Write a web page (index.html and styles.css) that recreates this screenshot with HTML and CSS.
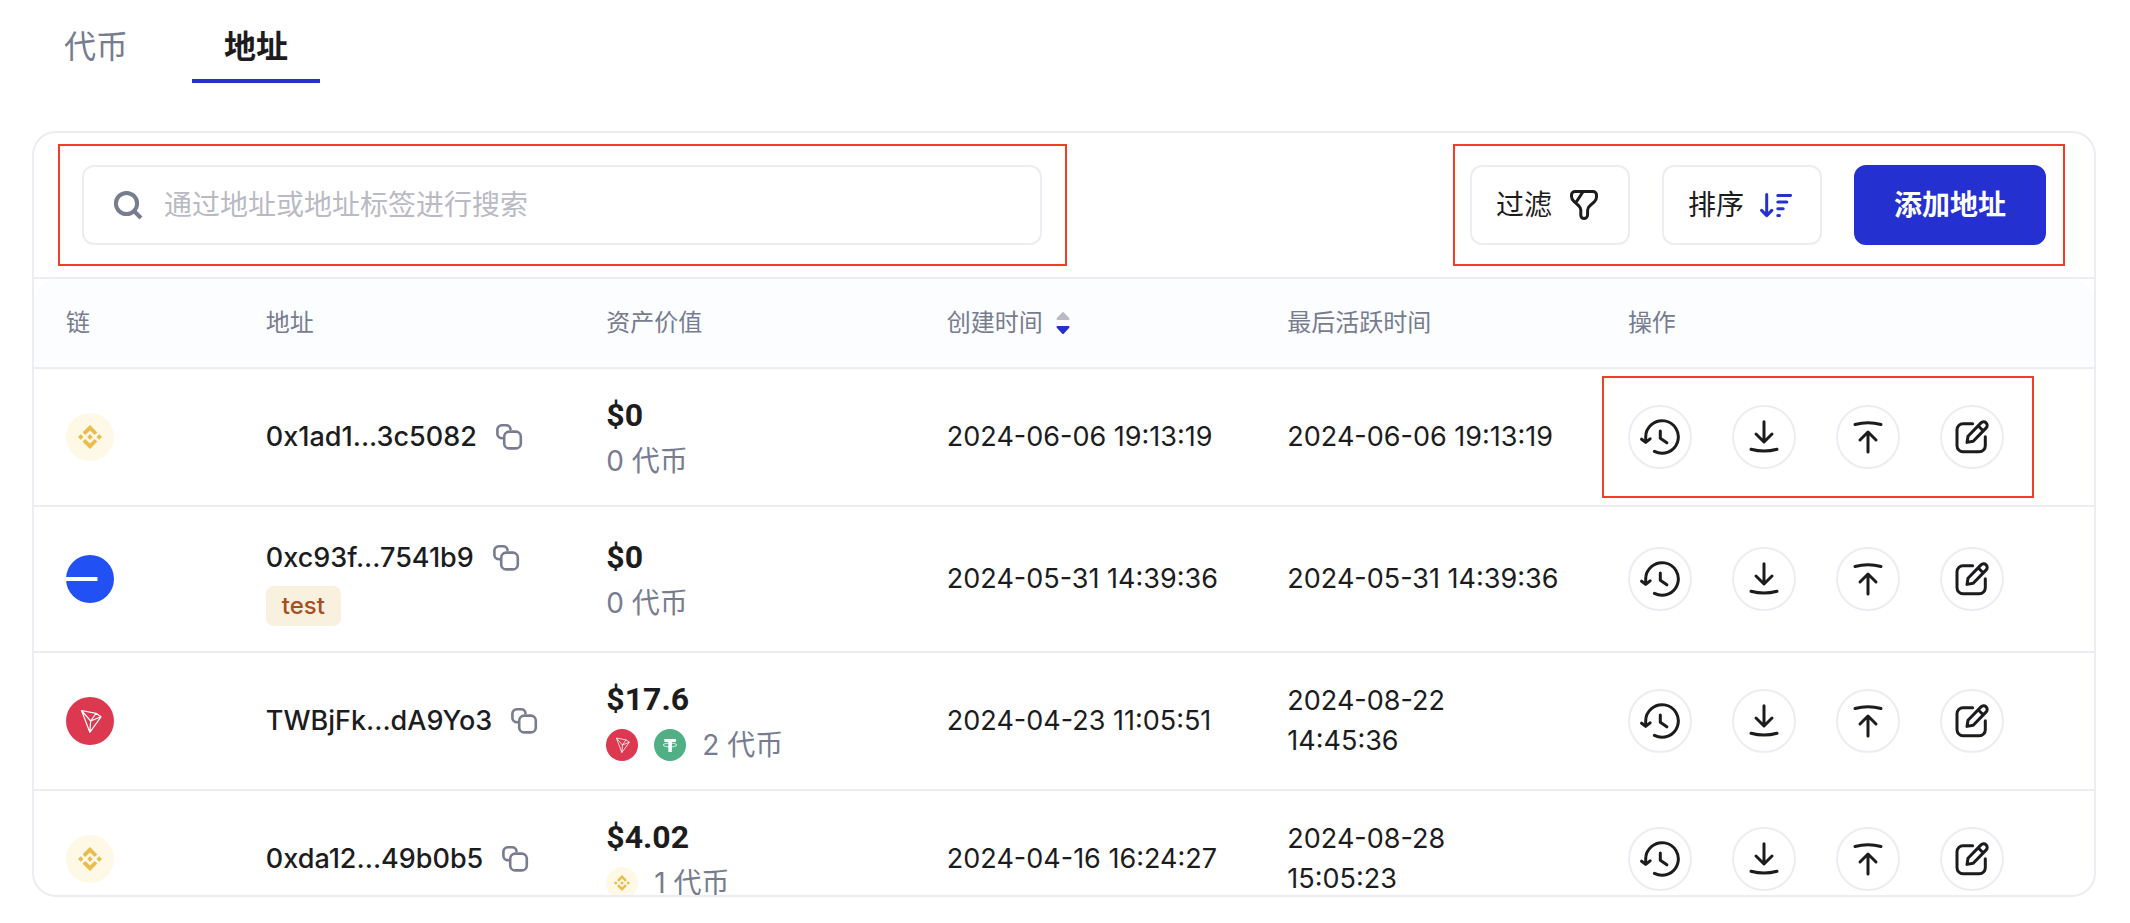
FILE: index.html
```
<!DOCTYPE html>
<html lang="zh-CN">
<head>
<meta charset="utf-8">
<meta name="viewport" content="width=device-width, initial-scale=1">
<title>地址</title>
<link rel="stylesheet" href="styles.css">
</head>
<body>
<svg class="sprite" aria-hidden="true">
  <symbol id="copy" viewBox="0 0 28 28"><g fill="none" stroke="currentColor" stroke-width="2.6" stroke-linecap="round"><rect x="9.2" y="8.6" width="16.6" height="16.8" rx="5"/><path d="M7.4 15.2C4.4 15.2 2.4 13.4 2.4 11V6.6a4.3 4.3 0 0 1 4.3-4.3h4.6a4.2 4.2 0 0 1 4.2 3.8"/></g></symbol>
  <symbol id="history" viewBox="0 0 40 40"><path d="M5.7 25v-5A16.3 16.3 0 1 1 14.4 34.4M1.6 22.2l4.1 3.2 4.4-3.6M20.3 14v7.3l6.5 4.5"/></symbol>
  <symbol id="download" viewBox="0 0 40 40"><path d="M20 4.7v19.8M12 17l8 8 8-8M7 32.3q13 3.6 26 0"/></symbol>
  <symbol id="upload" viewBox="0 0 40 40"><path d="M20 35V15.5M12 23l8-8 8 8M7 7.5q13-3.6 26 0"/></symbol>
  <symbol id="edit" viewBox="0 0 40 40"><path d="M20.6 6.7H11a6 6 0 0 0-6 6v16a6 6 0 0 0 6 6h16.3a6 6 0 0 0 6-6v-8.9M15 25.4l1-6.2L29 5.9a3.6 3.6 0 0 1 5.2 5L21.2 24.2zM26.4 9l5 5"/></symbol>
  <symbol id="bnb" viewBox="0 0 48 48"><circle cx="24" cy="24" r="24" fill="#fef8e7"/><path transform="translate(4.8 4.8) scale(1.2)" fill="#eabc4b" d="M12.116 14.404L16 10.52l3.886 3.886 2.26-2.26L16 6l-6.144 6.144 2.26 2.26zM6 16l2.26-2.26L10.52 16l-2.26 2.26L6 16zm6.116 1.596L16 21.48l3.886-3.886 2.26 2.259L16 26l-6.144-6.144-.003-.003 2.263-2.257zM21.48 16l2.26-2.26L26 16l-2.26 2.26L21.48 16zm-3.188-.002h.002V16L16 18.294l-2.291-2.29-.004-.004.6-.6L16 13.706l2.293 2.293z"/></symbol>
  <symbol id="base" viewBox="0 0 48 48"><circle cx="24" cy="24" r="24" fill="#2151f5"/><path d="M0 22h31.5v4H0z" fill="#fff"/></symbol>
  <symbol id="tron" viewBox="0 0 48 48"><circle cx="24" cy="24" r="24" fill="#dc384f"/><path d="M15.5 13.500L30 16.300l5 3.500-11.200 15.500zL24.700 24 35 19.800M24.700 24l-.9 11.300M24.700 24L30 16.300" fill="none" stroke="#fff" stroke-width="1.200" stroke-linejoin="round"/></symbol>
  <symbol id="usdt" viewBox="0 0 32 32"><circle cx="16" cy="16" r="16" fill="#50af84"/><path d="M10.300 9.900h11.600v3h-4v10.200h-3.600V12.900h-4z" fill="#fff"/><ellipse cx="16" cy="16" rx="6.800" ry="1.900" fill="none" stroke="#fff" stroke-width=".8"/></symbol>
</svg>

<nav class="tabs">
  <a class="tab" href="#tokens">代币</a>
  <a class="tab tab-active" href="#addresses" aria-current="page">地址</a>
</nav>

<main class="panel">
  <div class="toolbar">
    <label class="search callout callout-search">
      <svg class="search-icon" viewBox="0 0 32 32" aria-hidden="true"><circle cx="14.500" cy="14.500" r="10.600"/><path d="M22 22l7 7"/></svg>
      <input class="search-input" type="search" placeholder="通过地址或地址标签进行搜索" aria-label="搜索">
    </label>
    <div class="toolbar-actions callout callout-toolbar">
      <button class="btn" type="button">过滤
        <svg class="btn-icon" viewBox="0 0 32 32" aria-hidden="true"><path d="M7 2.500h18a3.500 3.500 0 0 1 3.500 3.500v2c0 2-1 3.600-2.300 4.900l-4.400 4c-1.400 1.300-2.200 2.600-2.200 4.400v4.500c0 2-1.800 3.700-3.600 3.700s-3.200-1.400-3.200-3.200v-5.200c0-1.700-.8-3-2-4.200L6 12.400C4.500 11 3.500 9.500 3.500 7.500V6A3.500 3.500 0 0 1 7 2.500zM15 2.800L7.800 13.800"/></svg>
      </button>
      <button class="btn" type="button">排序
        <svg class="btn-icon btn-icon-sort" viewBox="0 0 32 32" aria-hidden="true"><path d="M6.700 5.500v21M1.600 21.400l5.100 5.200 5.100-5.200M17.800 6.400h12.800M17.800 13h9M17.800 19.800h5.400M17.800 26.500h1.600"/></svg>
      </button>
      <button class="btn btn-primary" type="button">添加地址</button>
    </div>
  </div>

  <table class="grid">
    <colgroup><col class="col-chain"><col class="col-data"><col class="col-data"><col class="col-data"><col class="col-data"><col></colgroup>
    <thead>
      <tr>
        <th scope="col">链</th>
        <th scope="col">地址</th>
        <th scope="col">资产价值</th>
        <th scope="col" aria-sort="descending"><span class="sortable">创建时间
          <svg class="carets" viewBox="0 0 16 24" aria-hidden="true"><path d="M2.500 8L8 2l5.500 6z" fill="#b9bac4" stroke="#b9bac4"/><path d="M2.500 16L8 22l5.500-6z" fill="#2430d0" stroke="#2430d0"/></svg></span></th>
        <th scope="col">最后活跃时间</th>
        <th scope="col">操作</th>
      </tr>
    </thead>
    <tbody>
      <tr>
        <td><svg class="chain" role="img" aria-label="BNB"><use href="#bnb"/></svg></td>
        <td><div class="address">0x1ad1...3c5082<button class="copy" type="button" aria-label="复制"><svg><use href="#copy"/></svg></button></div></td>
        <td><div class="value">$0</div><div class="tokens">0 代币</div></td>
        <td>2024-06-06 19:13:19</td>
        <td>2024-06-06 19:13:19</td>
        <td><div class="actions callout callout-actions">
          <button class="action" type="button" aria-label="历史"><svg><use href="#history"/></svg></button>
          <button class="action" type="button" aria-label="接收"><svg><use href="#download"/></svg></button>
          <button class="action" type="button" aria-label="发送"><svg><use href="#upload"/></svg></button>
          <button class="action" type="button" aria-label="编辑"><svg><use href="#edit"/></svg></button>
        </div></td>
      </tr>
      <tr>
        <td><svg class="chain" role="img" aria-label="Base"><use href="#base"/></svg></td>
        <td class="tagged"><div class="address">0xc93f...7541b9<button class="copy" type="button" aria-label="复制"><svg><use href="#copy"/></svg></button></div><span class="tag">test</span></td>
        <td><div class="value">$0</div><div class="tokens">0 代币</div></td>
        <td>2024-05-31 14:39:36</td>
        <td>2024-05-31 14:39:36</td>
        <td><div class="actions">
          <button class="action" type="button" aria-label="历史"><svg><use href="#history"/></svg></button>
          <button class="action" type="button" aria-label="接收"><svg><use href="#download"/></svg></button>
          <button class="action" type="button" aria-label="发送"><svg><use href="#upload"/></svg></button>
          <button class="action" type="button" aria-label="编辑"><svg><use href="#edit"/></svg></button>
        </div></td>
      </tr>
      <tr>
        <td><svg class="chain" role="img" aria-label="Tron"><use href="#tron"/></svg></td>
        <td><div class="address">TWBjFk...dA9Yo3<button class="copy" type="button" aria-label="复制"><svg><use href="#copy"/></svg></button></div></td>
        <td><div class="value">$17.6</div><div class="tokens"><svg class="token"><use href="#tron"/></svg><svg class="token"><use href="#usdt"/></svg>2 代币</div></td>
        <td>2024-04-23 11:05:51</td>
        <td>2024-08-22<br>14:45:36</td>
        <td><div class="actions">
          <button class="action" type="button" aria-label="历史"><svg><use href="#history"/></svg></button>
          <button class="action" type="button" aria-label="接收"><svg><use href="#download"/></svg></button>
          <button class="action" type="button" aria-label="发送"><svg><use href="#upload"/></svg></button>
          <button class="action" type="button" aria-label="编辑"><svg><use href="#edit"/></svg></button>
        </div></td>
      </tr>
      <tr>
        <td><svg class="chain" role="img" aria-label="BNB"><use href="#bnb"/></svg></td>
        <td><div class="address">0xda12...49b0b5<button class="copy" type="button" aria-label="复制"><svg><use href="#copy"/></svg></button></div></td>
        <td><div class="value">$4.02</div><div class="tokens"><svg class="token"><use href="#bnb"/></svg>1 代币</div></td>
        <td>2024-04-16 16:24:27</td>
        <td>2024-08-28<br>15:05:23</td>
        <td><div class="actions">
          <button class="action" type="button" aria-label="历史"><svg><use href="#history"/></svg></button>
          <button class="action" type="button" aria-label="接收"><svg><use href="#download"/></svg></button>
          <button class="action" type="button" aria-label="发送"><svg><use href="#upload"/></svg></button>
          <button class="action" type="button" aria-label="编辑"><svg><use href="#edit"/></svg></button>
        </div></td>
      </tr>
    </tbody>
  </table>
</main>
</body>
</html>
```
FILE: styles.css
```
:root {
  --ink: #1c1c1e;
  --muted: #777c8f;
  --faint: #b9bac4;
  --line: #ececf3;
  --primary: #2430d0;
  --mark: #f03e27;
  --cjk: "Noto Sans CJK SC", sans-serif;
}

* { box-sizing: border-box; }

body {
  margin: 0;
  height: 100vh;
  padding: 23px 34px 26px 32px;
  display: flex;
  flex-direction: column;
  gap: 48px;
  background: #fff;
  color: var(--ink);
  font-family: Inter, var(--cjk);
  font-size: 27px;
  line-height: 40px;
}

button, input { font: inherit; color: inherit; }
svg { display: block; }
.sprite { position: absolute; width: 0; height: 0; }

.tabs { display: flex; flex: none; gap: 32px; }
.tab {
  padding: 0 32px 8px;
  border-bottom: 4px solid transparent;
  color: var(--muted);
  font-size: 32px;
  line-height: 48px;
  text-decoration: none;
}
.tab-active { border-color: var(--primary); color: var(--ink); font-weight: 700; }

.panel {
  flex: 1;
  min-height: 0;
  overflow: hidden;
  border: 2px solid var(--line);
  border-radius: 24px;
}

.toolbar {
  display: flex;
  justify-content: space-between;
  gap: 48px;
  padding: 32px 48px;
  border-bottom: 2px solid var(--line);
}

.search {
  flex: 0 1 960px;
  display: flex;
  align-items: center;
  gap: 20px;
  height: 80px;
  padding: 0 28px;
  border: 2px solid var(--line);
  border-radius: 12px;
}
.search-icon {
  flex: none;
  width: 32px;
  height: 32px;
  fill: none;
  stroke: var(--muted);
  stroke-width: 4;
}
.search-input {
  flex: 1;
  min-width: 0;
  padding: 0;
  border: 0;
  outline: 0;
  background: none;
  font-size: 28px;
}
.search-input::placeholder { color: var(--faint); opacity: 1; }

.toolbar-actions { display: flex; gap: 32px; }
.btn {
  display: flex;
  align-items: center;
  gap: 16px;
  height: 80px;
  padding: 0 28px 0 24px;
  border: 2px solid var(--line);
  border-radius: 12px;
  background: #fff;
  font-size: 28px;
  white-space: nowrap;
}
.btn-icon {
  width: 32px;
  height: 32px;
  fill: none;
  stroke: var(--ink);
  stroke-width: 3;
  stroke-linecap: round;
  stroke-linejoin: round;
}
.btn-icon-sort { stroke: var(--primary); }
.btn-primary {
  padding: 0 38px;
  border-color: var(--primary);
  background: var(--primary);
  color: #fff;
  font-weight: 700;
}

.callout { position: relative; }
.callout::after {
  content: "";
  position: absolute;
  border: 2px solid var(--mark);
  pointer-events: none;
}
.callout-search::after { inset: -23px -27px -23px -26px; }
.callout-toolbar::after { inset: -21px -19px -21px -17px; }
.callout-actions::after { inset: -29px -30px -29px -26px; }

.grid {
  width: 100%;
  table-layout: fixed;
  border-collapse: separate;
  border-spacing: 0;
}
.col-chain { width: 9.7%; }
.col-data { width: 16.53%; }
th, td {
  padding: 28px 32px;
  border-bottom: 2px solid var(--line);
  text-align: left;
  vertical-align: middle;
}
th {
  padding: 24px 32px;
  background: #fcfdff;
  color: var(--muted);
  font-size: 24px;
  font-weight: 400;
}
th:first-child { border-top-left-radius: 24px; }
th:last-child { border-top-right-radius: 24px; }
td { white-space: nowrap; }
.tagged { padding-top: 31px; padding-bottom: 25px; }

.sortable { display: flex; align-items: center; gap: 12px; }
.carets { width: 16px; height: 24px; stroke-width: 2; stroke-linejoin: round; }

.chain { width: 48px; height: 48px; }

.address { display: flex; align-items: center; gap: 18px; font-weight: 500; }
.copy { padding: 0; border: 0; background: none; color: var(--muted); }
.copy svg { width: 28px; height: 28px; }
.tag {
  display: block;
  width: fit-content;
  margin-top: 8px;
  padding: 0 16px;
  border-radius: 8px;
  background: #f9f1e0;
  color: #a84f1f;
  font-size: 24px;
  font-weight: 500;
}

.value {
  font-family: Roboto, sans-serif;
  font-size: 32px;
  font-weight: 700;
  line-height: 36px;
}
.tokens {
  display: flex;
  align-items: center;
  gap: 16px;
  margin-top: 12px;
  color: var(--muted);
  font-size: 28px;
  line-height: 32px;
}
.token { width: 32px; height: 32px; }

.actions { display: flex; gap: 40px; width: fit-content; }
.action {
  display: grid;
  place-items: center;
  width: 64px;
  height: 64px;
  padding: 0;
  border: 2px solid var(--line);
  border-radius: 50%;
  background: #fff;
}
.action svg {
  width: 40px;
  height: 40px;
  fill: none;
  stroke: var(--ink);
  stroke-width: 3;
  stroke-linecap: round;
  stroke-linejoin: round;
}
```
